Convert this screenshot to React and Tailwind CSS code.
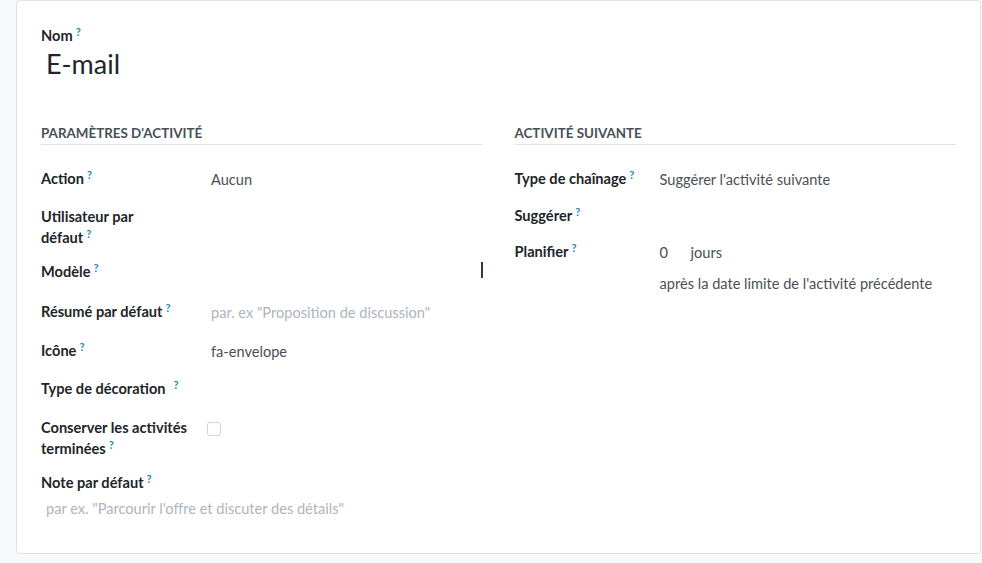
import React from 'react';

const Help = ({ className = '' }) => (
    <span className={`ml-[3px] inline-block align-[5px] text-[11px] leading-none font-bold text-[#1b8bb0] ${className}`}>?</span>
);

const Label = ({ children, help = true, helpClass = '' }) => (
    <span className="font-bold text-[#212529]">
        {children}
        {help && <Help className={helpClass} />}
    </span>
);

const Row = ({ label, labelWidth, height, children }) => (
    <div className={`flex ${height}`}>
        <div className={`${labelWidth} shrink-0 leading-[21px]`}>{label}</div>
        <div className="flex-1 pt-[1px] leading-[21px] text-[#495057]">{children}</div>
    </div>
);

export default function App() {
    return (
        <div className="min-h-screen bg-[#f8f9fa] pl-4 pr-px text-[14.6px]" style={{ fontFamily: 'Lato, "Noto Sans", sans-serif' }}>
            <div className="h-[554px] rounded-[4px] border border-[#dee2e6] bg-white px-6 pt-[24px]">
                <div className="leading-[21px]">
                    <Label>Nom</Label>
                </div>
                <div className="pl-[5px] text-[27px] leading-[36px] text-[#212529]">E-mail</div>

                <div className="mt-[41px] grid grid-cols-2 gap-8">
                    {/* Paramètres d'activité */}
                    <div>
                        <div className="border-b border-[#dee2e6] pb-[1px] text-[13.4px] font-bold uppercase leading-[20px] text-[#495057]">
                            Paramètres d'activité
                        </div>
                        <div className="pt-[23px]">
                            <Row label={<Label>Action</Label>} labelWidth="w-[170px]" height="h-[38px]">Aucun</Row>
                            <Row label={<Label>Utilisateur par défaut</Label>} labelWidth="w-[125px]" height="h-[55px]" />
                            <div className="flex h-[40px]">
                                <div className="w-[170px] shrink-0 leading-[21px]"><Label>Modèle</Label></div>
                                <div className="flex flex-1 justify-end pt-[1px]">
                                    <div className="h-[16px] w-[2px] bg-[#343a40]" />
                                </div>
                            </div>
                            <Row label={<Label>Résumé par défaut</Label>} labelWidth="w-[170px]" height="h-[39px]">
                                <span className="text-[#adb5bd]">par. ex "Proposition de discussion"</span>
                            </Row>
                            <Row label={<Label>Icône</Label>} labelWidth="w-[170px]" height="h-[38px]">fa-envelope</Row>
                            <Row label={<Label helpClass="ml-[8px]">Type de décoration</Label>} labelWidth="w-[170px]" height="h-[39px]" />
                            <div className="flex h-[55px]">
                                <div className="w-[166px] shrink-0 leading-[21px]"><Label>Conserver les activités terminées</Label></div>
                                <div className="pt-[5px]">
                                    <div className="h-[14px] w-[14px] rounded-[3px] border border-[#ced4da] bg-white" />
                                </div>
                            </div>
                            <div className="leading-[21px]"><Label>Note par défaut</Label></div>
                            <div className="mt-[5px] pl-[5px] leading-[21px] text-[#adb5bd]">
                                par ex. "Parcourir l'offre et discuter des détails"
                            </div>
                        </div>
                    </div>

                    {/* Activité suivante */}
                    <div>
                        <div className="border-b border-[#dee2e6] pb-[1px] text-[13.4px] font-bold uppercase leading-[20px] text-[#495057]">
                            Activité suivante
                        </div>
                        <div className="pt-[23px]">
                            <Row label={<Label>Type de chaînage</Label>} labelWidth="w-[145px]" height="h-[37px]">Suggérer l'activité suivante</Row>
                            <Row label={<Label>Suggérer</Label>} labelWidth="w-[145px]" height="h-[36px]" />
                            <div className="flex">
                                <div className="w-[145px] shrink-0 leading-[21px]"><Label>Planifier</Label></div>
                                <div className="flex-1 pt-[1px] leading-[21px] text-[#495057]">
                                    <div className="flex">
                                        <span className="w-[31px]">0</span>
                                        <span>jours</span>
                                    </div>
                                    <div className="mt-[10px]">après la date limite de l'activité précédente</div>
                                </div>
                            </div>
                        </div>
                    </div>
                </div>
            </div>
        </div>
    );
}
